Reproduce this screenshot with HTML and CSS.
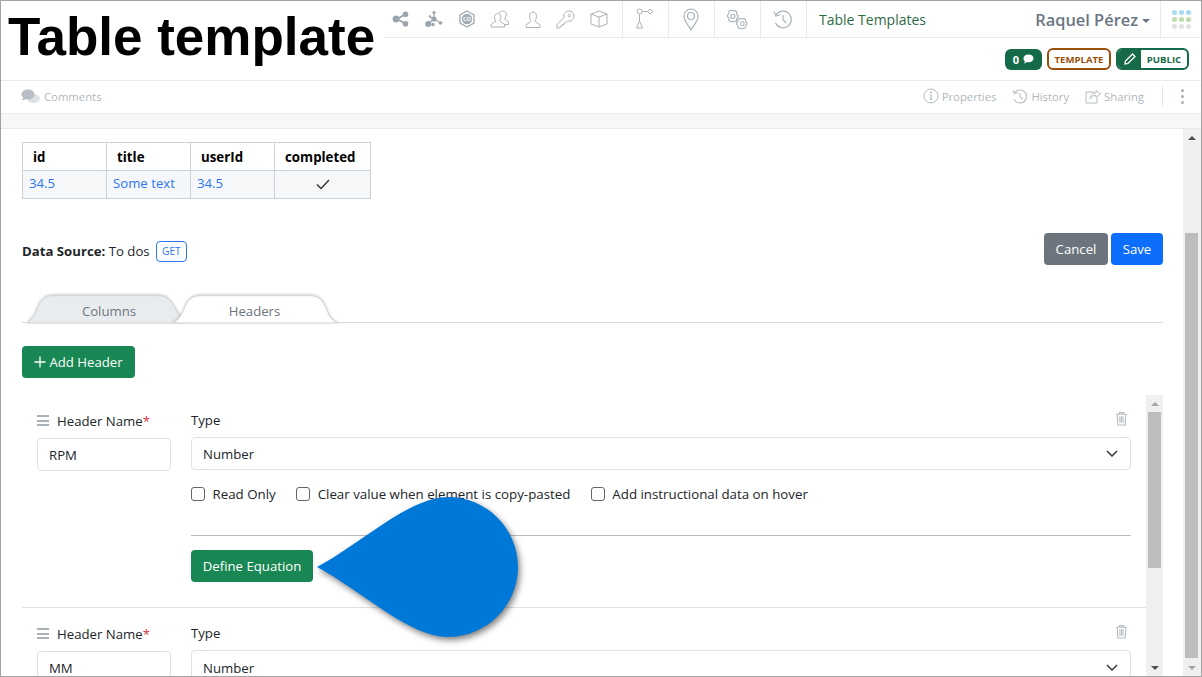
FILE: index.html
```html
<!DOCTYPE html>
<html lang="en">
<head>
<meta charset="utf-8">
<title>Table template</title>
<link rel="stylesheet" href="styles.css">
</head>
<body>
<div class="frame">
  <header class="topbar">
    <div class="cell-group">
      <span class="ico"><svg width="18" height="16" viewBox="0 0 18 16"><path d="M5 8L13 3.5M5 8l8 4.5" stroke="#9aa5ae" stroke-width="2"/><circle cx="4" cy="8" r="3.4" fill="#9aa5ae"/><circle cx="13.5" cy="3.2" r="2.8" fill="#9aa5ae"/><circle cx="13.5" cy="12.8" r="2.8" fill="#9aa5ae"/></svg></span>
      <span class="ico"><svg width="18" height="18" viewBox="0 0 18 18"><path d="M9 2v7M9 9l-6 5M9 9l7 4M9 9l-4-2" stroke="#9aa5ae" stroke-width="1.3"/><circle cx="9" cy="2.5" r="1.6" fill="#9aa5ae"/><circle cx="9" cy="9" r="2.6" fill="#9aa5ae"/><circle cx="3.2" cy="14" r="3" fill="#9aa5ae"/><circle cx="8" cy="14.5" r="1.7" fill="#9aa5ae"/><circle cx="15.5" cy="13" r="1.8" fill="#9aa5ae"/><circle cx="5" cy="6.5" r="1.2" fill="#9aa5ae"/></svg></span>
      <span class="ico"><svg width="18" height="18" viewBox="0 0 18 18"><path d="M9 1l7 4v8l-7 4-7-4V5z" fill="none" stroke="#a3adb6" stroke-width="1.4"/><circle cx="9" cy="9" r="5.2" fill="#a3adb6"/><text x="9" y="11" class="hex-text">CO</text></svg></span>
      <span class="ico"><svg width="20" height="20" viewBox="0 0 20 20" fill="none" stroke="#aab2bb"><path d="M1 18v-2c0-2 4-2.500 5-4-2-2-2.500-7 1.500-7.500 4-.5 4 5 2 7.500 1 1.500 5 2 5 4v2z"/><path d="M9 4c1-2 6-3 7 0 .7 2.500-.3 5-1.500 6 1 1.200 4 1.500 4 4v1.500h-4"/></svg></span>
      <span class="ico"><svg width="18" height="20" viewBox="0 0 18 20" fill="none" stroke="#aab2bb"><path d="M2 18.500v-2c0-2 5-2.500 5-5-2-2-2.500-8.500 2-8.500s4 6.500 2 8.500c0 2.500 5 3 5 5v2z"/></svg></span>
      <span class="ico"><svg width="19" height="19" viewBox="0 0 19 19" fill="none" stroke="#aab2bb"><path d="M1 14.500L8 7.500C7 3.500 10 1 13 1c3 0 5 2.500 5 5 0 3.500-3 6-6.500 5l-2 2H8v1.500H6.500V16H5l-1.500 2H1z"/><circle cx="13.500" cy="5.500" r="1.300"/></svg></span>
      <span class="ico"><svg width="18" height="18" viewBox="0 0 18 18" fill="none" stroke="#aab2bb"><path d="M9 1l8 3v10l-8 3-8-3V4zM1 4l8 3 8-3M9 7v10"/></svg></span>
    </div>
    <span class="cell"><svg width="18" height="22" viewBox="0 0 18 22" fill="none" stroke="#aab2bb"><circle cx="3.500" cy="3.500" r="2.500"/><path d="M6 3.500h6M3.500 6v7"/><path d="M14 1l3 2.500-3 2.500-2.500-2.500z"/><path d="M3.500 13l3 7h-6z"/></svg></span>
    <span class="cell"><svg width="16" height="23" viewBox="0 0 16 23" fill="none" stroke="#aab2bb" stroke-width="1.200"><path d="M8 22C5 17 1 13 1 8a7 7 0 0 1 14 0c0 5-4 9-7 14z"/><circle cx="8" cy="8" r="3.500"/></svg></span>
    <span class="cell"><svg width="24" height="21" viewBox="0 0 22 20" fill="none" stroke="#aab2bb"><circle cx="7" cy="7" r="2"/><path d="M7 1.500l1.500.5 1-.5 1.500 1.500-.5 1 .5 1.500 1 .5v2l-1 .5-.5 1.500.5 1L10 12l-1-.5-1.500.5H6l-.5-.5-1 .5L3 10.500l.5-1L3 8l-1-.5v-2L3 5l.5-1.500-.5-1L4.500 1l1 .5z"/><circle cx="16" cy="14" r="1.800"/><path d="M16 9l1 .5 1-.3 1.300 1.300-.3 1 .5 1 1 .5v1.800l-1 .5-.5 1 .3 1-1.300 1.300-1-.3-1 .5h-1l-1-.5-1 .3-1.300-1.300.3-1-.5-1-1-.5V13l1-.5.5-1-.3-1 1.300-1.300 1 .3 1-.5z"/></svg></span>
    <span class="cell"><svg width="20" height="19" viewBox="0 0 20 19" fill="none" stroke="#aab2bb" stroke-width="1.200"><path d="M3 5A8.300 8.300 0 1 1 2.500 13"/><path d="M1 1.500L3 6l4.500-1.500"/><path d="M10 5v5l3.500 3"/></svg></span>
    <span class="crumb">Table Templates</span>
    <span class="spacer"></span>
    <span class="user">Raquel Pérez</span>
    <span class="caret"></span>
    <span class="apps">
      <i class="dot dot-b"></i><i class="dot dot-b"></i><i class="dot dot-b"></i>
      <i class="dot dot-g"></i><i class="dot dot-g"></i><i class="dot dot-g"></i>
      <i class="dot dot-n"></i><i class="dot dot-n"></i><i class="dot dot-n"></i>
    </span>
  </header>

  <div class="statusrow">
    <span class="badge-count">0 <svg width="11" height="10" viewBox="0 0 11 10"><path d="M5.500 0.500c2.900 0 5 1.700 5 3.900s-2.100 3.900-5 3.900c-.6 0-1.100-.1-1.600-.2C3 8.900 1.900 9.500.8 9.500c.7-.7 1-1.400 1.100-2.200C1 6.600.5 5.600.5 4.400.5 2.200 2.600.5 5.500.5z" fill="#fff"/></svg></span>
    <span class="badge-template">TEMPLATE</span>
    <span class="badge-public">
      <span class="pub-ico"><svg width="12" height="12" viewBox="0 0 12 12"><path d="M8.500 1l2.500 2.500L4 10.500 1 11l.5-3z" fill="none" stroke="#fff" stroke-width="1.300"/></svg></span>
      <span class="pub-text">PUBLIC</span>
    </span>
  </div>

  <div class="actionbar">
    <span class="action action-left"><svg width="20" height="17" viewBox="0 0 20 16"><ellipse cx="12.500" cy="10" rx="6.500" ry="4.500" fill="#dfe2e5"/><path d="M7 1c3.500 0 6.500 2 6.500 5s-3 5-6.500 5c-.7 0-1.400-.1-2-.3C4 11 2.500 11.500.5 11.500 1.500 10.800 2.200 10 2.400 9.200 1.100 8.300.5 7.200.5 6 .5 3 3.500 1 7 1z" fill="#b8bec4"/></svg>Comments</span>
    <span class="spacer"></span>
    <span class="action"><svg width="16" height="16" viewBox="0 0 16 16" fill="none" stroke="#b4bbc2"><circle cx="8" cy="8" r="7"/><path d="M8 7v4.500M6.800 11.500h2.400M6.800 7H8" stroke-width="1.200"/><circle cx="8" cy="4.500" r="1" fill="#b4bbc2" stroke="none"/></svg>Properties</span>
    <span class="action"><svg width="16" height="15" viewBox="0 0 20 19" fill="none" stroke="#b4bbc2" stroke-width="1.300"><path d="M3 5A8.300 8.300 0 1 1 2.500 13"/><path d="M1 1.500L3 6l4.500-1.500"/><path d="M10 5v5l3.500 3"/></svg>History</span>
    <span class="action"><svg width="16" height="15" viewBox="0 0 16 15" fill="none" stroke="#b4bbc2"><path d="M9 3H1v11h11V9"/><path d="M5 10c0-4 3-6 6-6V1.500L15.500 5 11 8.500V6.500c-3 0-5 1-6 3.500z"/></svg>Sharing</span>
    <span class="vline"></span>
    <span class="kebab"><i></i><i></i><i></i></span>
  </div>
  <div class="strip"></div>

  <main class="main">
    <section class="content">
      <table class="preview">
        <thead><tr><th>id</th><th>title</th><th>userId</th><th class="col-wide">completed</th></tr></thead>
        <tbody><tr><td>34.5</td><td>Some text</td><td>34.5</td><td class="check"><svg width="14" height="11" viewBox="0 0 14 11"><path d="M1 5.500l4 4 8-8.500" fill="none" stroke="#333" stroke-width="1.400"/></svg></td></tr></tbody>
      </table>

      <div class="source-row">
        <p class="source"><b>Data Source:</b> To dos <span class="get">GET</span></p>
        <span class="spacer"></span>
        <button class="btn btn-gray">Cancel</button>
        <button class="btn btn-blue">Save</button>
      </div>

      <div class="tabs">
        <span class="tab tab-columns"><svg class="tab-bg" width="155" height="28" viewBox="0 0 155 28"><path d="M0 28C5 25 8 19 10 14 13 6 17 1 25 .7H131c8 0 11 3 15 9l11 18.300z" fill="#e9ecef" stroke="#d2d4d7"/></svg><span class="tab-label">Columns</span></span>
        <span class="tab tab-headers"><svg class="tab-bg" width="165" height="28" viewBox="0 0 165 28"><path d="M0 28C6 25 9 19 11 14 14 6 18 1 26 .7H137c8 0 12 4 15 10 3 7 6 16 13 17.300z" fill="#fff" stroke="#d2d4d7"/></svg><span class="tab-label">Headers</span></span>
      </div>

      <button class="btn btn-green btn-add"><svg width="12" height="12" viewBox="0 0 12 12"><path d="M6 .5v11M.5 6h11" stroke="#fff" stroke-width="1.300"/></svg>Add Header</button>

      <div class="scroller">
        <div class="rows">
          <div class="row">
            <div class="name-col">
              <div class="name-label"><span class="grip"><i></i><i></i><i></i></span>Header Name<span class="req">*</span></div>
              <div class="input">RPM</div>
            </div>
            <div class="type-col">
              <div class="type-label">Type<svg width="13" height="15" viewBox="0 0 12 14" fill="none" stroke="#b4bbc2"><path d="M1 3h10M4 3V1.500h4V3M2 3l.5 10h7L10 3M4.500 5v6M6 5v6M7.500 5v6"/></svg></div>
              <div class="select">Number<svg width="12" height="7" viewBox="0 0 12 7"><path d="M1 1l5 5 5-5" fill="none" stroke="#343a40" stroke-width="1.500"/></svg></div>
              <div class="checks">
                <label class="chk"><input type="checkbox">Read Only</label>
                <label class="chk"><input type="checkbox">Clear value when element is copy-pasted</label>
                <label class="chk"><input type="checkbox">Add instructional data on hover</label>
              </div>
              <hr class="rule">
              <button class="btn btn-green btn-define">Define Equation</button>
            </div>
          </div>
          <div class="row">
            <div class="name-col">
              <div class="name-label"><span class="grip"><i></i><i></i><i></i></span>Header Name<span class="req">*</span></div>
              <div class="input">MM</div>
            </div>
            <div class="type-col">
              <div class="type-label">Type<svg width="13" height="15" viewBox="0 0 12 14" fill="none" stroke="#b4bbc2"><path d="M1 3h10M4 3V1.500h4V3M2 3l.5 10h7L10 3M4.500 5v6M6 5v6M7.500 5v6"/></svg></div>
              <div class="select">Number<svg width="12" height="7" viewBox="0 0 12 7"><path d="M1 1l5 5 5-5" fill="none" stroke="#343a40" stroke-width="1.500"/></svg></div>
            </div>
          </div>
        </div>
        <div class="sbar sbar-inner">
          <span class="arrow"><i class="tri-up tri-light"></i></span>
          <span class="thumb thumb-inner"></span>
          <span class="spacer"></span>
          <span class="arrow"><i class="tri-down"></i></span>
        </div>
      </div>
    </section>
    <div class="sbar sbar-page">
      <span class="arrow"><i class="tri-up"></i></span>
      <span class="thumb thumb-page"></span>
      <span class="spacer"></span>
      <span class="arrow"><i class="tri-down tri-light"></i></span>
    </div>
  </main>

  <h1 class="title">Table template</h1>
  <svg class="drop" width="222" height="160" viewBox="0 0 222 160"><path d="M8 80C50 58 100 10 139 10c38 0 70 31 70 70s-32 70-70 70C100 150 50 102 8 80z" fill="#0078d7"/></svg>
</div>
</body>
</html>
```
FILE: styles.css
```css
* { box-sizing: border-box; }
html, body { margin: 0; padding: 0; }
body { font-family: "Open Sans", "Noto Sans", sans-serif; font-size: 13.2px; color: #212529; background: #fff; }
.frame { position: relative; width: 1202px; height: 677px; border: 1px solid #a3a3a3; overflow: hidden; display: flex; flex-direction: column; background: #fff; }
.spacer { flex: 1; }

.topbar { height: 37px; flex: none; display: flex; align-items: center; padding-left: 383px; border-bottom: 1px solid #e8eaed; }
.cell-group { display: flex; align-items: center; height: 36px; padding-right: 7px; border-right: 1px solid #e8eaed; }
.ico { width: 33px; display: flex; justify-content: center; align-items: center; }
.cell { width: 46px; height: 36px; padding-right: 2px; display: flex; justify-content: center; align-items: center; border-right: 1px solid #e8eaed; }
.hex-text { font-size: 5.5px; font-weight: 700; fill: #fff; text-anchor: middle; }
.crumb { margin-left: 12px; font-size: 14px; color: #2e6b45; }
.user { font-size: 16.4px; font-weight: 600; color: #6b7683; }
.caret { width: 0; height: 0; margin: 3px 10px 0 4px; border: 4px solid transparent; border-top-color: #6b7683; border-bottom: 0; }
.apps { width: 41px; height: 36px; padding: 9px 10px 0 11px; display: grid; grid-template-columns: repeat(3, 5px); grid-auto-rows: 5px; gap: 2px; border-left: 1px solid #e8eaed; }
.dot { border-radius: 50%; }
.dot-b { background: #a6dbf2; }
.dot-g { background: #bfdcae; }
.dot-n { background: #dfe1e3; }

.statusrow { height: 43px; flex: none; display: flex; justify-content: flex-end; align-items: center; gap: 5px; padding: 0 12px 0 0; border-bottom: 1px solid #e8eaed; font-size: 9.6px; font-weight: 700; }
.badge-count { width: 37px; height: 21px; border-radius: 6px; background: #156a47; color: #fff; display: flex; align-items: center; justify-content: center; gap: 4px; font-size: 11px; }
.badge-template { width: 64px; height: 22px; border: 2px solid #9a4f0c; border-radius: 6px; color: #9a4f0c; display: flex; align-items: center; justify-content: center; }
.badge-public { width: 73px; height: 22px; border: 2px solid #156a47; border-radius: 6px; display: flex; overflow: hidden; color: #156a47; }
.pub-ico { width: 23px; background: #156a47; display: flex; align-items: center; justify-content: center; }
.pub-text { flex: 1; display: flex; align-items: center; justify-content: center; }

.actionbar { height: 33px; flex: none; display: flex; align-items: center; padding: 0 17px 2px 20px; border-bottom: 1px solid #e8eaed; color: #b1b7bd; font-size: 11.3px; }
.action { display: flex; align-items: center; gap: 3px; margin-right: 16px; }
.action-left { margin: 0; }
.vline { width: 1px; height: 20px; background: #e3e5e8; margin: 0 18px 0 2px; }
.kebab { display: flex; flex-direction: column; gap: 3px; width: 3px; }
.kebab i { width: 3px; height: 3px; border-radius: 50%; background: #a8aeb5; }
.strip { height: 15px; flex: none; background: #f6f7f9; border-bottom: 1px solid #e8eaed; }

.main { flex: 1; min-height: 0; display: flex; }
.content { flex: 1; min-width: 0; padding: 13px 20px 0 21px; display: flex; flex-direction: column; }

.preview { border-collapse: collapse; width: 349px; table-layout: fixed; flex: none; }
.preview th { height: 28px; border: 1px solid #cbd1d9; text-align: left; padding: 0 0 0 10px; font-size: 13.3px; font-weight: 700; color: #000; width: 84px; }
.preview th.col-wide { width: 96px; }
.preview td { height: 28px; border: 1px solid #cbd1d9; background: #f6f7f9; color: #2a76f4; padding: 0 0 3px 6px; }
.preview td.check { text-align: center; padding: 0; }

.source-row { margin-top: 34px; height: 32px; flex: none; display: flex; align-items: center; gap: 3px; }
.source { margin: 4px 0 0; color: #212529; }
.get { display: inline-block; margin-left: 3px; padding: 0 5px; height: 21px; line-height: 18px; border: 1px solid #2a76f4; border-radius: 4px; color: #2a76f4; font-size: 10.2px; vertical-align: 1px; }
.btn { border: 0; border-radius: 4px; height: 32px; padding: 0; font: inherit; color: #fff; display: flex; align-items: center; justify-content: center; }
.btn-gray { width: 64px; background: #6c757d; }
.btn-blue { width: 52px; background: #0d6efd; }
.btn-green { background: #198754; }
.btn-add { width: 113px; margin-top: 23px; gap: 3px; flex: none; }
.btn-define { width: 122px; margin-top: 14px; }

.tabs { margin-top: 30px; height: 28px; flex: none; display: flex; padding-left: 5px; border-bottom: 1px solid #d8dadd; }
.tab { position: relative; height: 28px; display: flex; align-items: center; justify-content: center; padding-top: 3px; color: #6c757d; }
.tab-bg { position: absolute; left: 0; top: 0; overflow: visible; filter: drop-shadow(0 -1px 1px rgba(0,0,0,.18)); }
.tab-label { position: relative; }
.tab-columns { width: 155px; padding-left: 9px; }
.tab-headers { width: 165px; margin-left: -9px; padding-right: 2px; }

.scroller { margin-top: 17px; flex: 1; min-height: 0; display: flex; }
.rows { flex: 1; min-width: 0; }
.row { display: flex; gap: 20px; padding: 15px 15px 25px; border-bottom: 1px solid #dfe1e4; }
.name-col { width: 134px; flex: none; padding-top: 1px; }
.type-col { flex: 1; min-width: 0; }
.name-label { height: 27px; padding-top: 1px; line-height: 18px; display: flex; align-items: flex-start; color: #212529; }
.grip { display: flex; flex-direction: column; gap: 2.5px; width: 12px; margin: 3px 8px 0 0; }
.grip i { height: 2px; background: #a8b0b8; }
.req { color: #dc3545; }
.input { height: 33px; border: 1px solid #dee2e6; border-radius: 4px; padding-left: 11px; display: flex; align-items: center; }
.type-label { height: 27px; padding: 1px 3px 0 0; line-height: 18px; display: flex; align-items: flex-start; justify-content: space-between; }
.select { height: 33px; border: 1px solid #dee2e6; border-radius: 4px; padding: 0 12px 0 11px; display: flex; align-items: center; justify-content: space-between; }
.row + .row .select { padding-top: 2px; }
.checks { margin-top: 14px; height: 20px; display: flex; gap: 20.5px; font-size: 13.3px; }
.chk { display: flex; align-items: center; gap: 7.5px; }
.chk input { appearance: none; width: 14px; height: 14px; margin: 0; border: 1px solid #5f6770; border-radius: 3px; background: #fff; }
.rule { margin: 31px 0 0; height: 1px; border: 0; background: #bdbdbd; }

.sbar { flex: none; display: flex; flex-direction: column; align-items: center; background: #f0f0f0; }
.sbar-inner { width: 17px; }
.sbar-page { width: 18px; padding-right: 1px; }
.arrow { width: 17px; height: 17px; display: flex; align-items: center; justify-content: center; flex: none; }
.tri-up { width: 0; height: 0; border: 4px solid transparent; border-top: 0; border-bottom: 4px solid #505050; }
.tri-down { width: 0; height: 0; border: 4px solid transparent; border-bottom: 0; border-top: 4px solid #505050; }
.tri-up.tri-light { border-bottom-color: #a3a3a3; }
.tri-down.tri-light { border-top-color: #a3a3a3; }
.thumb { width: 13px; background: #bdbdbd; flex: none; }
.thumb-inner { height: 156px; }
.thumb-page { height: 425px; margin-top: 87px; }

.title { position: absolute; left: 0; top: 0; width: 383px; height: 64px; margin: 0; padding: 0 0 0 7px; background: #fff; font-family: "Liberation Sans", Arial, sans-serif; font-size: 53px; font-weight: 700; line-height: 71px; color: #000; white-space: nowrap; }
.drop { position: absolute; left: 308px; top: 486px; overflow: visible; filter: drop-shadow(2px 3px 3px rgba(0,0,0,.5)); }
```
